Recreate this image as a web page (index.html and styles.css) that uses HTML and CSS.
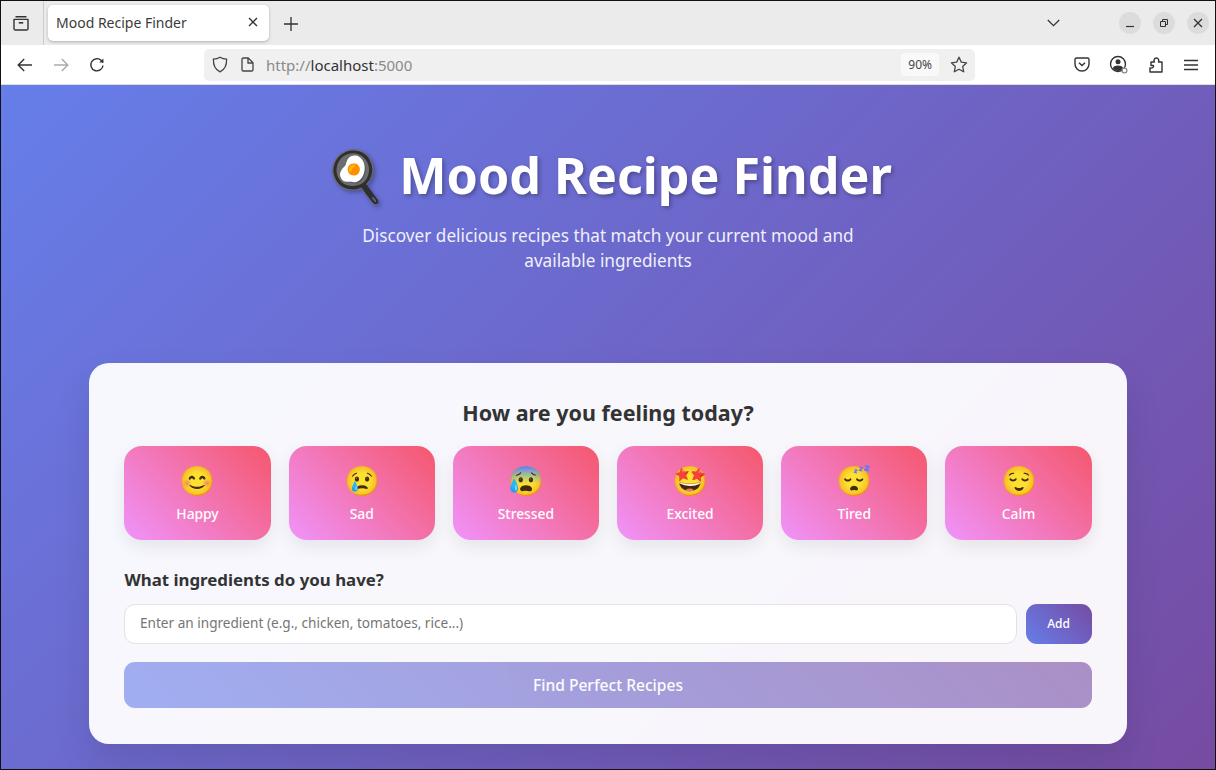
FILE: index.html
```html
<!DOCTYPE html>
<html lang="en">
<head>
  <meta charset="UTF-8" />
  <title>Mood Recipe Finder</title>
  <link rel="stylesheet" href="styles.css">
</head>
<body>
  <div class="window">
    <div class="tabbar">
      <div class="tabs-btn">
        <svg width="18" height="18" viewBox="0 0 18 18" fill="none" stroke="#333" stroke-width="1.4"><path d="M3.5 2.700h11M2 5.400h14v9a1.600 1.600 0 0 1-1.600 1.600H3.600A1.600 1.600 0 0 1 2 14.400z" stroke-linejoin="round"/><path d="M6.800 8.800h4.400" stroke-width="1.600"/></svg>
      </div>
      <div class="tab">
        <span class="tab-title">Mood Recipe Finder</span>
        <svg width="10" height="10" viewBox="0 0 10 10" stroke="#333" stroke-width="1.4"><path d="M1 1l8 8M9 1l-8 8"/></svg>
      </div>
      <svg class="new-tab" width="14" height="14" viewBox="0 0 14 14" stroke="#333" stroke-width="1.3"><path d="M7 0v14M0 7h14"/></svg>
      <div class="tabbar-right">
        <svg class="tabs-down" width="13" height="8" viewBox="0 0 13 8" fill="none" stroke="#333" stroke-width="1.3"><path d="M.8 1l5.700 5.600L12.200 1"/></svg>
        <div class="win-btn"><svg width="10" height="10" viewBox="0 0 10 10" stroke="#333" stroke-width="1.2"><path d="M1 8.500h8"/></svg></div>
        <div class="win-btn"><svg width="10" height="10" viewBox="0 0 10 10" fill="none" stroke="#333" stroke-width="1"><path d="M1.500 3.500h5v5h-5zM3.500 3.500v-2h5v5h-2"/></svg></div>
        <div class="win-btn"><svg width="10" height="10" viewBox="0 0 10 10" stroke="#333" stroke-width="1.3"><path d="M1 1l8 8M9 1l-8 8"/></svg></div>
      </div>
    </div>
    <div class="navbar">
      <svg class="nav-icon" width="16" height="14" viewBox="0 0 16 14" fill="none" stroke="#333" stroke-width="1.4"><path d="M15 7H1.500M7.200 1L1.200 7l6 6"/></svg>
      <svg class="nav-icon" width="16" height="14" viewBox="0 0 16 14" fill="none" stroke="#aaa" stroke-width="1.4"><path d="M1 7h13.500M8.800 1l6 6-6 6"/></svg>
      <svg class="nav-icon" width="16" height="16" viewBox="0 0 16 16" fill="none" stroke="#333" stroke-width="1.4"><path d="M14 8.500A6.100 6.100 0 1 1 12.400 3.600L14.200 5.400"/><path d="M14.400 1.400v4.200h-4.200z" fill="#333" stroke="none"/></svg>
      <div class="urlbar">
        <svg width="16" height="17" viewBox="0 0 16 17" fill="none" stroke="#444" stroke-width="1.3"><path d="M8 1.200c2 1.300 4 1.900 6.600 2 .2 5.600-1.700 10.300-6.600 12.600C3.100 13.500 1.200 8.800 1.400 3.200 4 3.100 6 2.500 8 1.200z"/></svg>
        <svg class="page-icon" width="13" height="15" viewBox="0 0 13 15" fill="none" stroke="#444" stroke-width="1.3"><path d="M1 2.300C1 1.500 1.500 1 2.300 1h4.900L12 5.800v6.900c0 .8-.5 1.300-1.300 1.300H2.300C1.500 14 1 13.500 1 12.700z"/><path d="M7 1v5h5"/></svg>
        <span class="url"><span class="url-dim">http://</span>localhost<span class="url-dim">:5000</span></span>
        <span class="zoom-badge">90%</span>
        <svg width="18" height="17" viewBox="0 0 18 17" fill="none" stroke="#444" stroke-width="1.3"><path d="M9 1.200l2.300 4.900 5.300.7-3.900 3.700 1 5.300L9 13.200l-4.700 2.600 1-5.300L1.400 6.800l5.300-.7z" stroke-linejoin="round"/></svg>
      </div>
      <div class="nav-right">
        <svg class="pocket" width="16" height="15" viewBox="0 0 16 15" fill="none" stroke="#333" stroke-width="1.4"><path d="M2.500 1h11c.9 0 1.500.6 1.500 1.500V7a7 7 0 0 1-14 0V2.500C1 1.600 1.600 1 2.500 1z"/><path d="M5 5.800l3 2.800 3-2.800"/></svg>
        <div class="account">
          <svg width="19" height="19" viewBox="0 0 19 19" fill="none" stroke="#333" stroke-width="1.4"><circle cx="9" cy="9" r="7.500"/><circle cx="9" cy="6.800" r="2.500" fill="#333" stroke="none"/><path d="M3.800 13c1-2 3-2.600 5.200-2.600s4.200.6 5.200 2.600c-1 2-3 3-5.200 3s-4.200-1-5.200-3z" fill="#333" stroke="none"/><circle cx="15.500" cy="15.500" r="2.400" fill="#fff" stroke="#888" stroke-width="1.200"/></svg>
        </div>
        <svg width="16" height="16" viewBox="0 0 16 16" fill="none" stroke="#333" stroke-width="1.4" stroke-linejoin="round"><path d="M2 15h12V5h-3.500c.8-2-.2-4-2.200-4S5.500 3 6.300 5H3v3.500h2.500c.5 1.500-.8 3-3.500 2.500z"/></svg>
        <svg width="14" height="12" viewBox="0 0 14 12" stroke="#333" stroke-width="1.4"><path d="M0 1.500h14M0 6h14M0 10.500h14"/></svg>
      </div>
    </div>

    <div class="page">
      <header class="hero">
        <h1><span class="pan">🍳</span> Mood Recipe Finder</h1>
        <p>Discover delicious recipes that match your current mood and available ingredients</p>
      </header>

      <main class="card">
        <h2>How are you feeling today?</h2>
        <div class="moods">
          <button class="mood"><span class="mood-emoji">😊</span><span class="mood-name">Happy</span></button>
          <button class="mood"><span class="mood-emoji">😢</span><span class="mood-name">Sad</span></button>
          <button class="mood"><span class="mood-emoji">😰</span><span class="mood-name">Stressed</span></button>
          <button class="mood"><span class="mood-emoji">🤩</span><span class="mood-name">Excited</span></button>
          <button class="mood"><span class="mood-emoji">😴</span><span class="mood-name">Tired</span></button>
          <button class="mood"><span class="mood-emoji">😌</span><span class="mood-name">Calm</span></button>
        </div>
        <h3>What ingredients do you have?</h3>
        <div class="ingredient-row">
          <input type="text" placeholder="Enter an ingredient (e.g., chicken, tomatoes, rice...)" />
          <button class="add-btn">Add</button>
        </div>
        <button class="find-btn">Find Perfect Recipes</button>
      </main>
    </div>
  </div>
</body>
</html>
```

FILE: styles.css
```css
* {
  box-sizing: border-box;
}
html, body {
  margin: 0;
  height: 100%;
}
body {
  font-family: "Noto Sans", sans-serif;
  overflow: hidden;
}
.window {
  height: 770px;
  border: 1px solid #111;
  display: flex;
  flex-direction: column;
}

/* browser chrome */
.tabbar {
  height: 44px;
  background: #ebebeb;
  display: flex;
  align-items: center;
  flex-shrink: 0;
}
.tabs-btn {
  width: 43px;
  height: 44px;
  border-right: 1px solid #ccc;
  padding-right: 2px;
  display: flex;
  align-items: center;
  justify-content: center;
}
.tab {
  margin-left: 4px;
  width: 221px;
  height: 36px;
  background: #fff;
  border-radius: 5px;
  box-shadow: 0 1px 3px rgba(0, 0, 0, .25);
  display: flex;
  align-items: center;
  justify-content: space-between;
  padding: 0 11px 2px 8px;
}
.tab-title {
  font-size: 14px;
  color: #3b3b3b;
}
.new-tab {
  margin-left: 15px;
  margin-top: 1px;
}
.tabbar-right {
  margin-left: auto;
  display: flex;
  align-items: center;
  gap: 12px;
  padding-right: 6px;
}
.tabs-down {
  margin-right: 47px;
}
.win-btn {
  width: 22px;
  height: 22px;
  border-radius: 50%;
  background: #dcdcdc;
  display: flex;
  align-items: center;
  justify-content: center;
}
.navbar {
  height: 40px;
  background: #fff;
  border-bottom: 1px solid #ddd;
  display: flex;
  align-items: center;
  padding-left: 16px;
  flex-shrink: 0;
}
.nav-icon {
  margin-right: 20px;
}
.nav-icon:nth-child(3) {
  margin-right: 0;
}
.urlbar {
  margin-left: 99px;
  width: 771px;
  height: 32px;
  background: #f0f0f0;
  border-radius: 5px;
  display: flex;
  align-items: center;
  padding: 0 7px 0 8px;
}
.page-icon {
  margin-left: 13px;
}
.url {
  margin-left: 12px;
  font-size: 15px;
  color: #333;
  flex: 1;
}
.url-dim {
  color: #8a8a8a;
}
.zoom-badge {
  background: #f9f9f9;
  border-radius: 4px;
  font-size: 12px;
  color: #444;
  padding: 3px 7px;
  margin-right: 11px;
}
.nav-right {
  display: flex;
  align-items: center;
  margin-left: auto;
  gap: 20px;
  padding-right: 17px;
}
.pocket {
  margin-right: -1px;
}
.account {
  display: flex;
}

/* page */
.page {
  flex: 1;
  background: linear-gradient(135deg, #667eea 0%, #764ba2 100%);
  overflow: hidden;
  padding-top: 54px;
}
.hero {
  text-align: center;
  color: #fff;
}
.hero h1 {
  margin: 0;
  font-size: 50.200px;
  font-weight: 700;
  line-height: 72px;
  text-shadow: 2px 2px 4px rgba(0, 0, 0, .3);
}
.hero p {
  margin: 12px auto 0;
  width: 520px;
  font-size: 17.200px;
  line-height: 25px;
  opacity: .9;
}
.card {
  width: 1038px;
  height: 381px;
  margin: 90px auto 0;
  padding: 35px 35.400px;
  background: rgba(255, 255, 255, .95);
  border-radius: 20px;
  box-shadow: 0 18px 36px rgba(0, 0, 0, .1);
}
.card h2 {
  margin: 0 0 18px;
  text-align: center;
  font-size: 21.500px;
  line-height: 30px;
  font-weight: 700;
  color: #333;
}
.moods {
  display: grid;
  grid-template-columns: repeat(6, 1fr);
  gap: 18px;
}
.mood {
  height: 94px;
  border: none;
  border-radius: 18px;
  background: linear-gradient(45deg, #f093fb 0%, #f5576c 100%);
  box-shadow: 0 7px 18px rgba(0, 0, 0, .08);
  color: #fff;
  font-family: inherit;
  display: flex;
  flex-direction: column;
  align-items: center;
  justify-content: center;
  padding: 0 0 3px;
}
.mood-emoji {
  font-size: 29px;
  line-height: 40px;
}
.mood-name {
  font-size: 13.800px;
  font-weight: 500;
  line-height: 20px;
  margin-top: 4px;
}
.card h3 {
  margin: 28px 0 12px;
  font-size: 16.850px;
  line-height: 24px;
  font-weight: 700;
  color: #333;
}
.ingredient-row {
  display: flex;
  gap: 9px;
}
.ingredient-row input {
  flex: 1;
  height: 40px;
  border: 1px solid #e1e1e6;
  border-radius: 11px;
  background: #fff;
  padding: 0 14.600px 3px;
  font-family: inherit;
  font-size: 13.600px;
}
.ingredient-row input::placeholder {
  color: #757575;
}
.add-btn {
  width: 66px;
  height: 40px;
  border: none;
  border-radius: 11px;
  background: linear-gradient(45deg, #667eea 0%, #764ba2 100%);
  color: #fff;
  font-family: inherit;
  font-size: 12px;
  font-weight: 500;
  padding-bottom: 2px;
}
.find-btn {
  display: block;
  width: 100%;
  height: 46px;
  margin-top: 18px;
  border: none;
  border-radius: 11px;
  background: linear-gradient(45deg, #667eea 0%, #764ba2 100%);
  opacity: .6;
  color: #fff;
  font-family: inherit;
  font-size: 15.600px;
  font-weight: 500;
}
```
